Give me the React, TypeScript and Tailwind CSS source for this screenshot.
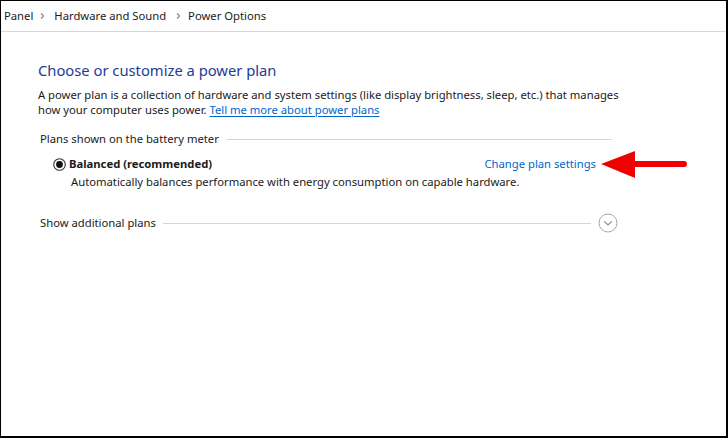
import React from "react"

function Crumb({ className }: { className: string }) {
  return (
    <svg width="7" height="8" viewBox="0 0 7 8" className={className}>
      <path d="M2 1.5 L4.6 4 L2 6.5" fill="none" stroke="#8a8a8a" strokeWidth="1.1" />
    </svg>
  )
}

function Radio() {
  return (
    <svg width="13" height="13" viewBox="0 0 13 13" className="shrink-0">
      <circle cx="6.5" cy="6.5" r="5.8" fill="#fff" stroke="#333" strokeWidth="1.1" />
      <circle cx="6.5" cy="6.5" r="3.4" fill="#111" />
    </svg>
  )
}

function ExpandButton() {
  return (
    <svg width="20" height="20" viewBox="0 0 20 20" className="shrink-0">
      <circle cx="10" cy="10" r="9" fill="#fff" stroke="#a8a8a8" strokeWidth="1" />
      <path d="M6.3 8.3 L10 12 L13.7 8.3" fill="none" stroke="#8c8c8c" strokeWidth="1.2" />
    </svg>
  )
}

function RedArrow() {
  return (
    <svg width="88" height="30" viewBox="0 0 88 30" className="absolute left-[562px] top-[-7px]">
      <polygon points="1,15 35,2 35,29" fill="#f00000" />
      <line x1="33" y1="15" x2="84" y2="15" stroke="#f00000" strokeWidth="6" strokeLinecap="round" />
    </svg>
  )
}

export default function App() {
  return (
    <div
      className="w-[728px] h-[438px] bg-white border-t border-l border-r-2 border-b-2 border-black flex flex-col text-[#1a1a1a] text-[11.25px] leading-[16px]"
      style={{ fontFamily: '"Noto Sans", "Segoe UI", sans-serif' }}
    >
      {/* Address bar */}
      <div className="h-[31px] border-b border-[#d9d9d9] flex items-center pl-[3px]">
        <span>Panel</span>
        <Crumb className="ml-[6px] mr-[8px]" />
        <span>Hardware and Sound</span>
        <Crumb className="ml-[9px] mr-[6px]" />
        <span>Power Options</span>
      </div>

      {/* Content */}
      <div className="pl-[37px] pr-[114px] pt-[27px] flex flex-col">
        <h1 className="text-[14.75px] leading-[22px] text-[#1e3c96]">Choose or customize a power plan</h1>
        <p className="mt-[6px] leading-[15px] whitespace-nowrap">
          A power plan is a collection of hardware and system settings (like display brightness, sleep, etc.) that manages
          <br />
          how your computer uses power.{" "}
          <a href="#" className="text-[#0066cc] underline underline-offset-2">Tell me more about power plans</a>
        </p>

        <div className="mt-[14px] flex items-center pl-[2px] gap-[8px]">
          <span className="whitespace-nowrap">Plans shown on the battery meter</span>
          <div className="flex-1 h-px bg-[#d6d6d6]" />
        </div>

        <div className="relative mt-[9px] flex items-center pl-[15px] pr-[16px]">
          <Radio />
          <span className="ml-[3px] font-bold">Balanced (recommended)</span>
          <a href="#" className="ml-auto text-[#0066cc]">Change plan settings</a>
          <RedArrow />
        </div>
        <p className="pl-[33px] mt-[2px]">
          Automatically balances performance with energy consumption on capable hardware.
        </p>

        <div className="mt-[23px] flex items-center pl-[2px] gap-[7px] mr-[-6px]">
          <span className="whitespace-nowrap">Show additional plans</span>
          <div className="flex-1 h-px bg-[#d6d6d6]" />
          <ExpandButton />
        </div>
      </div>
    </div>
  )
}
